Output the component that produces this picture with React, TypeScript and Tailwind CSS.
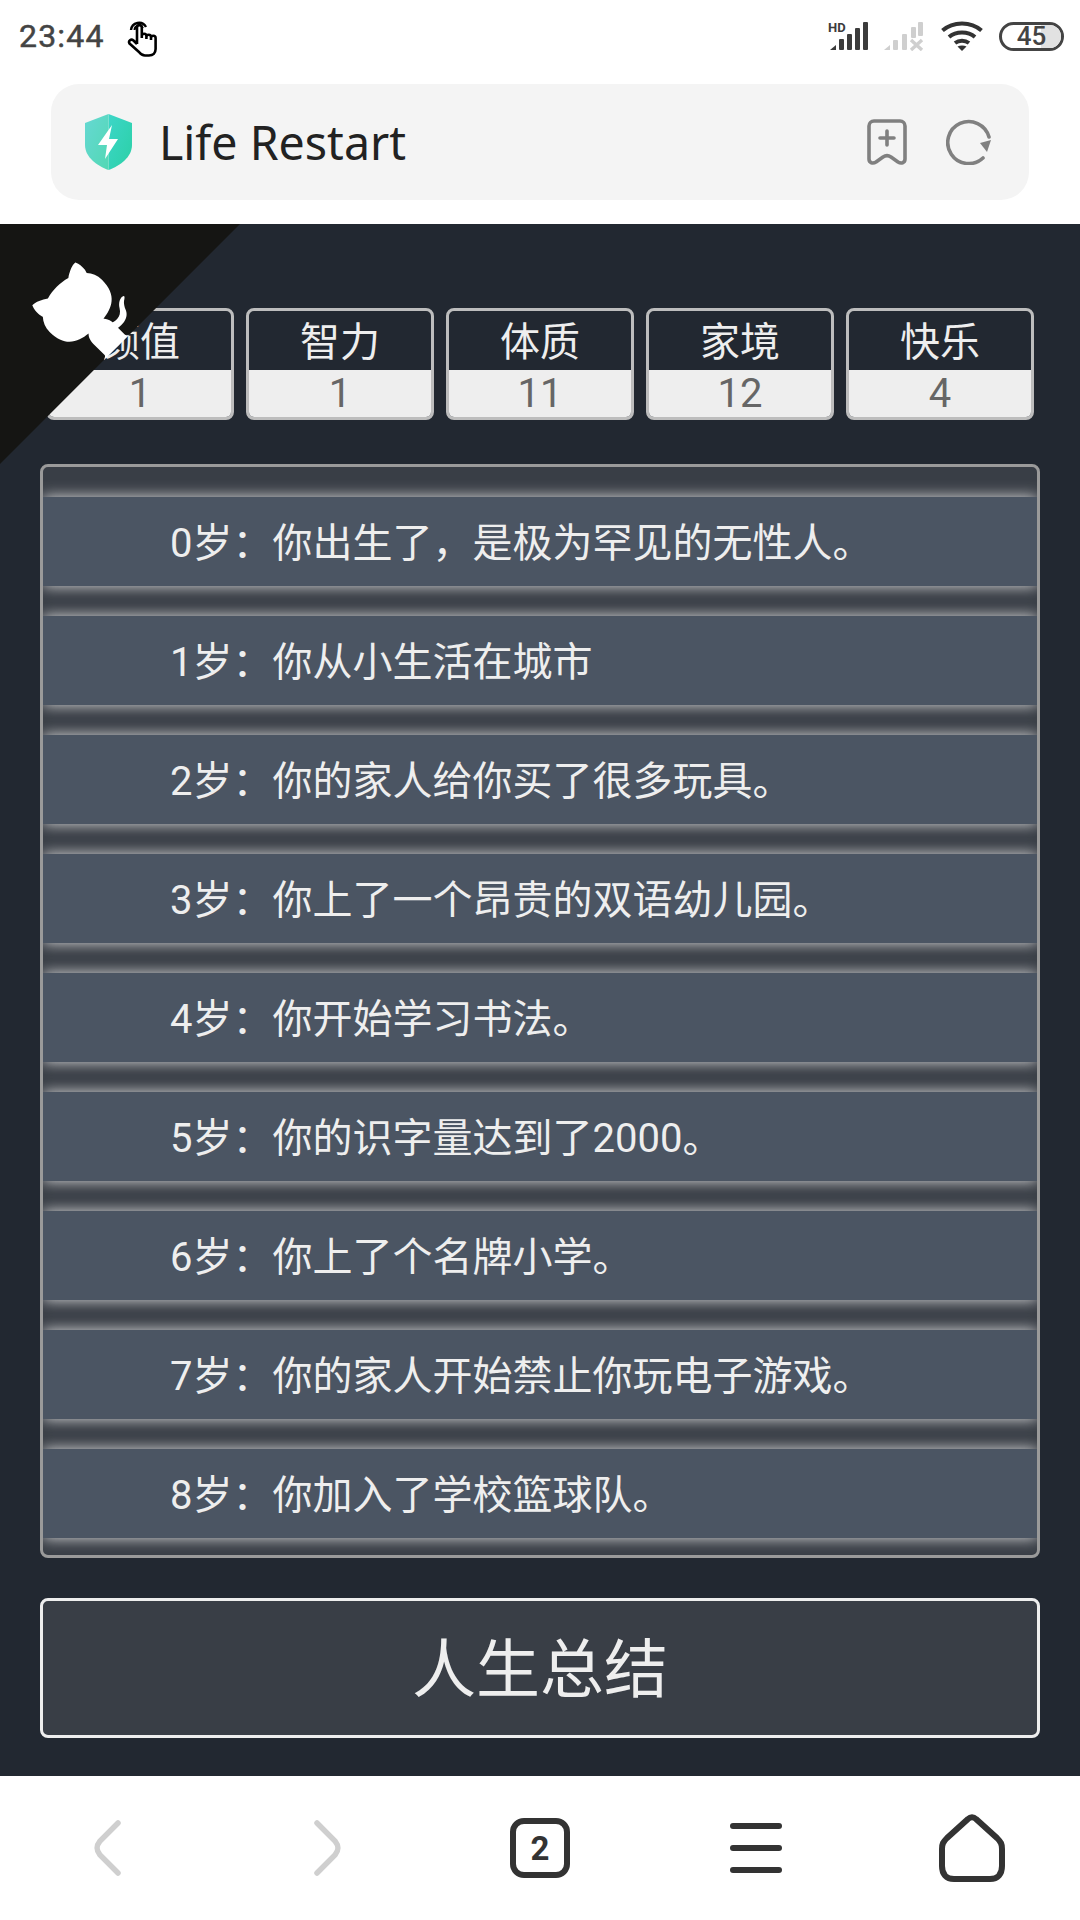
import React from 'react';

const stats = [
  { label: '颜值', value: 1 },
  { label: '智力', value: 1 },
  { label: '体质', value: 11 },
  { label: '家境', value: 12 },
  { label: '快乐', value: 4 },
];

const events = [
  '0岁：你出生了，是极为罕见的无性人。',
  '1岁：你从小生活在城市',
  '2岁：你的家人给你买了很多玩具。',
  '3岁：你上了一个昂贵的双语幼儿园。',
  '4岁：你开始学习书法。',
  '5岁：你的识字量达到了2000。',
  '6岁：你上了个名牌小学。',
  '7岁：你的家人开始禁止你玩电子游戏。',
  '8岁：你加入了学校篮球队。',
];

const StatusBar: React.FC = () => (
  <div className="h-[84px] flex items-center pl-[19px] pr-[16px] pb-[12px]">
    <span className="text-[32px] leading-none tracking-[1.2px] text-[#444] font-['Roboto',sans-serif] [-webkit-text-stroke:0.5px_#444]">23:44</span>
    <svg className="ml-[22px] mt-[1px]" width="36" height="42" viewBox="0 0 36 42" fill="none" stroke="#000">
      <path d="M4 14 A8 8 0 0 1 19 11" strokeWidth="2.4" />
      <path d="M7.5 14 A4.5 4.5 0 0 1 16 12" strokeWidth="2" />
      <path d="M10 28 V11.5 a2.4 2.4 0 0 1 4.8 0 V22 M14.8 20 a2.3 2.3 0 0 1 4.6 0 V23 M19.4 21 a2.3 2.3 0 0 1 4.6 0 V24 M24 22 a2.3 2.3 0 0 1 4.6 0 V33 C28.6 37 26 39.5 22 39.5 H18 C15 39.5 13.5 38 12 36 L2.5 27.5 C1 25 4 22.5 6.5 24.5 L10 28" strokeWidth="2.6" fill="#fff" strokeLinejoin="round" />
    </svg>
    <div className="ml-auto flex items-center">
      <svg className="overflow-visible" width="42" height="30" viewBox="0 0 42 30">
        <text x="0" y="11" fontSize="13" fontWeight="700" fill="#3c3c3c" fontFamily="Roboto, sans-serif">HD</text>
        <path d="M2 29 L8 24 V29 Z" fill="#3c3c3c" />
        <rect x="11" y="18" width="5" height="11" rx="1" fill="#3c3c3c" />
        <rect x="19" y="13" width="5" height="16" rx="1" fill="#3c3c3c" />
        <rect x="27" y="7" width="5" height="22" rx="1" fill="#3c3c3c" />
        <rect x="35" y="1" width="5" height="28" rx="1" fill="#3c3c3c" />
      </svg>
      <svg className="ml-[13px]" width="42" height="30" viewBox="0 0 42 30">
        <path d="M1 29 L7 24 V29 Z" fill="#cfcfcf" />
        <rect x="10" y="19" width="5" height="10" rx="1" fill="#cfcfcf" />
        <rect x="19" y="13" width="5" height="16" rx="1" fill="#cfcfcf" />
        <rect x="28" y="6" width="5" height="11" rx="1" fill="#cfcfcf" />
        <rect x="35" y="1" width="5" height="14" rx="1" fill="#cfcfcf" />
        <path d="M28 19 L39 29 M39 19 L28 29" stroke="#cfcfcf" strokeWidth="3.4" />
      </svg>
      <svg className="ml-[16px]" width="42" height="30" viewBox="0 0 42 30" fill="none" stroke="#333" strokeWidth="4">
        <path d="M1.5 9.5 C12 0 30 0 40.5 9.5" />
        <path d="M8 16 C15 10 27 10 34 16" />
        <path d="M14 22 C18 19 24 19 28 22" />
        <path d="M21 30 L16.5 25.5 C19 24 23 24 25.5 25.5 Z" fill="#333" stroke="none" />
      </svg>
      <div className="ml-[16px] relative w-[65px] h-[29px] rounded-full border-[3px] border-[#444] overflow-hidden flex items-center justify-center">
        <div className="absolute right-0 top-0 bottom-0 w-[20px] bg-[#e2e2e2]" />
        <span className="relative text-[26px] leading-none font-medium text-[#444] font-['Roboto',sans-serif]">45</span>
      </div>
    </div>
  </div>
);

const AddressBar: React.FC = () => (
  <div className="mx-[51px] h-[116px] rounded-[28px] bg-[#f4f4f4] flex items-center pl-[34px] pr-[36px]">
    <svg width="47" height="56" viewBox="0 0 47 56">
      <defs>
        <linearGradient id="shieldLeft" x1="0" y1="0" x2="1" y2="1">
          <stop offset="0" stopColor="#66d8d3" />
          <stop offset="1" stopColor="#52d8b4" />
        </linearGradient>
        <linearGradient id="shieldRight" x1="0" y1="0" x2="1" y2="1">
          <stop offset="0" stopColor="#3dd6c8" />
          <stop offset="1" stopColor="#2bd0a6" />
        </linearGradient>
      </defs>
      <path d="M23.5 0 L47 9 V31 C47 43 35 52 23.5 56 Z" fill="url(#shieldRight)" />
      <path d="M23.5 0 L0 9 V31 C0 43 12 52 23.5 56 Z" fill="url(#shieldLeft)" />
      <path d="M27 11 L13 31 H22 L20 45 L33 25 H24 Z" fill="#fff" />
    </svg>
    <span className="ml-[27px] text-[46.5px] leading-none text-[#222] font-['Noto_Sans',sans-serif]">Life Restart</span>
    <svg className="ml-auto" width="40" height="46" viewBox="0 0 40 46" fill="none" stroke="#808080" strokeWidth="3.6" strokeLinecap="round" strokeLinejoin="round">
      <path d="M7 2 H33 a5 5 0 0 1 5 5 V40 C38 44 34 45 31 43 L24 38 C21 36 19 36 16 38 L9 43 C6 45 2 44 2 40 V7 a5 5 0 0 1 5 -5 Z" />
      <path d="M20 12 V26 M13 19 H27" />
    </svg>
    <svg className="ml-[39px] mr-[1px]" width="46" height="46" viewBox="0 0 46 46" fill="none">
      <path d="M43 18 A21 21 0 1 0 37 39" stroke="#808080" strokeWidth="3.6" strokeLinecap="round" />
      <path d="M34 24 L45 21 L41 33 Z" fill="#808080" />
    </svg>
  </div>
);

const GithubCorner: React.FC = () => (
  <svg className="absolute top-0 left-0 -scale-x-100" width="240" height="240" viewBox="0 0 250 250" fill="#151513">
    <path d="M0,0 L115,115 L130,115 L142,142 L250,250 L250,0 Z" />
    <path d="M128.3,109.0 C113.8,99.7 119.0,89.6 119.0,89.6 C122.0,82.7 120.5,78.6 120.5,78.6 C119.2,72.0 123.4,76.3 123.4,76.3 C127.3,80.9 125.5,87.3 125.5,87.3 C122.9,97.6 130.6,101.9 134.4,103.2" fill="#fff" />
    <path d="M115.0,115.0 C114.9,115.1 118.7,116.5 119.8,115.4 L133.7,101.6 C136.9,99.2 139.9,98.4 142.2,98.6 C133.8,88.0 127.5,74.4 143.8,58.0 C148.5,53.4 154.0,51.2 159.7,51.0 C160.3,49.4 163.2,43.6 171.4,40.1 C171.4,40.1 176.1,42.5 178.8,56.2 C183.1,58.6 187.2,61.8 190.9,65.4 C194.5,69.0 197.7,73.2 200.1,77.6 C213.8,80.2 216.3,84.9 216.3,84.9 C212.7,93.1 206.9,96.0 205.4,96.6 C205.1,102.4 203.0,107.8 198.3,112.5 C181.9,128.9 168.3,122.5 157.7,114.1 C157.9,116.9 156.7,120.9 152.7,124.9 L141.0,136.5 C139.8,137.7 141.6,141.9 141.8,141.8 Z" fill="#fff" />
  </svg>
);

const Game: React.FC = () => (
  <main className="relative h-[1552px] bg-[#222831] px-[40px] pt-[84px] font-['Roboto','Noto_Sans_CJK_SC',sans-serif] text-[#eeeeee]">
    <div className="flex gap-[12px] pl-[6px]">
      {stats.map((s) => (
        <div key={s.label} className="w-[188px] h-[112px] shrink-0 rounded-[8px] border-[3px] border-[#bdbdbd] overflow-hidden flex flex-col">
          <div className="h-[59px] pt-[4px] flex items-center justify-center text-[40px] leading-none">{s.label}</div>
          <div className="flex-1 bg-[#eeeeee] text-[#666] flex items-center justify-center text-[40px] leading-none">{s.value}</div>
        </div>
      ))}
    </div>
    <div className="mt-[44px] h-[1094px] rounded-[8px] border-[3px] border-[#9a9a9a] bg-[#393e46] overflow-hidden pt-[30px] flex flex-col gap-[30px]">
      {events.map((e) => (
        <div key={e} className="h-[89px] shrink-0 bg-[#4b5563] flex items-center pl-[127px] pt-[5px] text-[40px] leading-none whitespace-nowrap shadow-[0_0_14px_rgba(238,238,238,0.9)]">
          {e}
        </div>
      ))}
    </div>
    <button className="mt-[40px] w-full h-[140px] pt-[5px] rounded-[8px] border-[3px] border-[#eeeeee] bg-[#393e46] text-[64px] leading-none">人生总结</button>
    <GithubCorner />
  </main>
);

const BottomNav: React.FC = () => (
  <nav className="h-[144px] flex items-center pl-[94px]">
    <svg width="28" height="56" viewBox="0 0 28 56" fill="none" stroke="#cfcfcf" strokeWidth="5.5" strokeLinecap="round">
      <path d="M24 3 L6 21 C2 26 2 30 6 35 L24 53" />
    </svg>
    <svg className="ml-[191px]" width="28" height="56" viewBox="0 0 28 56" fill="none" stroke="#cfcfcf" strokeWidth="5.5" strokeLinecap="round">
      <path d="M4 3 L22 21 C26 26 26 30 22 35 L4 53" />
    </svg>
    <div className="ml-[169px] w-[60px] h-[60px] rounded-[14px] border-[6px] border-[#333] flex items-center justify-center text-[33px] leading-none font-bold text-[#333] font-['Roboto',sans-serif]">2</div>
    <div className="ml-[160px] w-[52px] flex flex-col gap-[16px]">
      <div className="h-[6px] rounded-full bg-[#333]" />
      <div className="h-[6px] rounded-full bg-[#333]" />
      <div className="h-[6px] rounded-full bg-[#333]" />
    </div>
    <svg className="ml-[157px]" width="66" height="68" viewBox="0 0 66 68" fill="none" stroke="#333" strokeWidth="6" strokeLinejoin="round">
      <path d="M29 5 C31.5 2.5 34.5 2.5 37 5 L58 24 C62 28 63 30 63 35 V52 C63 60 59 65 51 65 H15 C7 65 3 60 3 52 V35 C3 30 4 28 8 24 Z" />
    </svg>
  </nav>
);

const App: React.FC = () => (
  <div className="w-[1080px] h-[1920px] bg-white overflow-hidden">
    <StatusBar />
    <AddressBar />
    <div className="h-[24px]" />
    <Game />
    <BottomNav />
  </div>
);

export default App;
